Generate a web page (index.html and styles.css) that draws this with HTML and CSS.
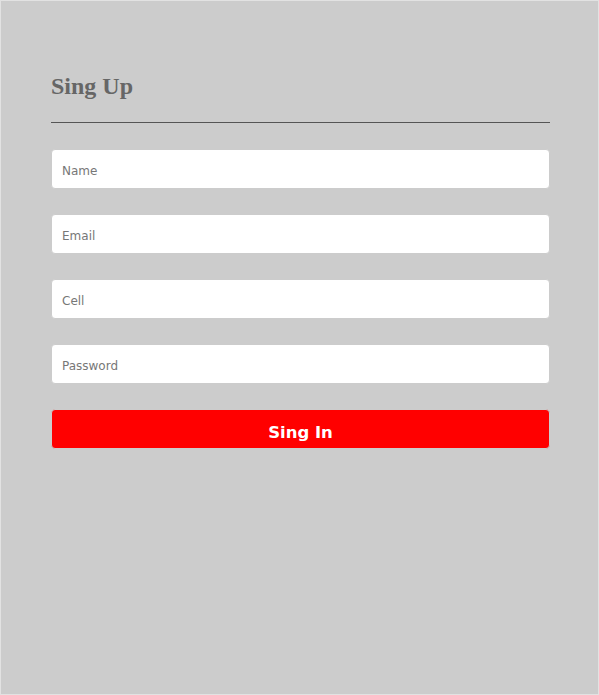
FILE: index.html
```html
<!DOCTYPE html>
<html lang="en">
<head>
<meta charset="utf-8">
<title>Sing Up</title>
<link rel="stylesheet" href="styles.css">
</head>
<body>
<div class="page">
  <div class="panel">
    <h1 class="title">Sing Up</h1>
    <hr class="rule">
    <form class="form">
      <input class="field" type="text" placeholder="Name">
      <input class="field" type="email" placeholder="Email">
      <input class="field" type="tel" placeholder="Cell">
      <input class="field" type="password" placeholder="Password">
      <button class="submit" type="button">Sing In</button>
    </form>
  </div>
</div>
</body>
</html>
```

FILE: styles.css
```css
html, body {
  margin: 0;
  padding: 0;
}

.page {
  box-sizing: border-box;
  width: 599px;
  height: 695px;
  background: #cccccc;
  border: 1px solid #e2e2e2;
  padding: 71px 0 0 50px;
}

.panel {
  width: 499px;
}

.title {
  margin: 0;
  font-family: "Liberation Serif", "Times New Roman", serif;
  font-weight: bold;
  font-size: 24px;
  line-height: 28px;
  color: #666666;
}

.rule {
  margin: 22px 0 0 0;
  border: 0;
  border-top: 1px solid #555555;
  height: 0;
}

.form {
  display: flex;
  flex-direction: column;
  gap: 25px;
  margin-top: 26px;
}

.field,
.submit {
  box-sizing: border-box;
  width: 100%;
  height: 40px;
  margin: 0;
  border: 1px solid #cccccc;
  border-radius: 4px;
  outline: none;
}

.field {
  background: #ffffff;
  padding: 3px 10px 0 10px;
  font-family: "DejaVu Sans", Verdana, sans-serif;
  font-size: 12px;
  color: #333333;
}

.field::placeholder {
  color: #777777;
}

.submit {
  background: #ff0000;
  color: #ffffff;
  font-family: "DejaVu Sans", Verdana, sans-serif;
  font-weight: bold;
  font-size: 16.5px;
  padding: 6px 0 0 0;
  cursor: pointer;
}
```
